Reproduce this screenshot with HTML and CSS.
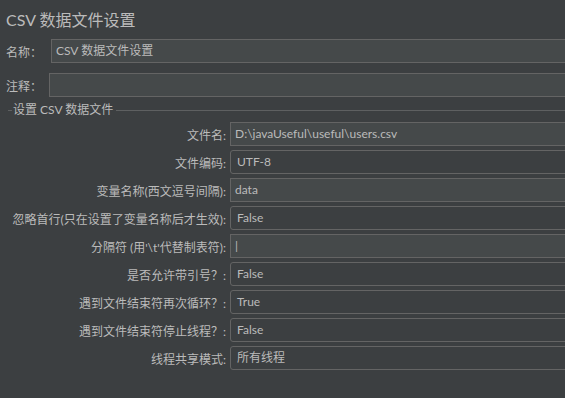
FILE: index.html
```html
<!DOCTYPE html>
<html lang="zh-CN">
<head>
    <meta charset="UTF-8">
    <title>CSV 数据文件设置</title>
    <link rel="stylesheet" href="styles.css">
</head>
<body>
    <div class="panel">
        <h1 class="title">CSV 数据文件设置</h1>

        <div class="top-row name-row">
            <label class="top-label name-label">名称：</label>
            <div class="field text-field">CSV 数据文件设置</div>
        </div>
        <div class="top-row note-row">
            <label class="top-label note-label">注释：</label>
            <div class="field text-field"></div>
        </div>

        <fieldset class="group">
            <legend>设置 CSV 数据文件</legend>
            <div class="form-grid">
                <label>文件名:</label>
                <div class="field text-field">D:\javaUseful\useful\users.csv</div>

                <label>文件编码:</label>
                <div class="field combo">UTF-8</div>

                <label>变量名称(西文逗号间隔):</label>
                <div class="field text-field">data</div>

                <label>忽略首行(只在设置了变量名称后才生效):</label>
                <div class="field combo">False</div>

                <label>分隔符 (用'\t'代替制表符):</label>
                <div class="field text-field">|</div>

                <label>是否允许带引号？:</label>
                <div class="field combo">False</div>

                <label>遇到文件结束符再次循环？:</label>
                <div class="field combo">True</div>

                <label>遇到文件结束符停止线程？:</label>
                <div class="field combo">False</div>

                <label>线程共享模式:</label>
                <div class="field combo">所有线程</div>
            </div>
        </fieldset>
    </div>
</body>
</html>
```

FILE: styles.css
```css
/* Darcula style settings panel */
html, body {
    margin: 0;
    padding: 0;
    overflow: hidden;
    background-color: #3c3f41;
}
body {
    font-family: Lato, "Noto Sans CJK SC", sans-serif;
    font-size: 12px;
    color: #bbbbbb;
    width: 565px;
    height: 398px;
}
.panel {
    width: calc(100% + 20px);
    padding: 9px 0 0 0;
    box-sizing: border-box;
}
.title {
    margin: 0 0 0 6px;
    font-size: 16px;
    font-weight: normal;
    line-height: 22px;
    color: #bbbbbb;
}
.top-row {
    display: flex;
    align-items: center;
    padding-left: 6px;
}
.name-row {
    margin-top: 8px;
}
.note-row {
    margin-top: 10px;
}
.top-label {
    flex: none;
}
.name-label {
    width: 45px;
}
.note-label {
    width: 43px;
}
.top-row .field {
    flex: 1;
}
.field {
    height: 24px;
    line-height: 22px;
    box-sizing: border-box;
    border: 1px solid #646464;
    white-space: nowrap;
    overflow: hidden;
}
.text-field {
    background-color: #45494a;
    padding-left: 4px;
}
.combo {
    background-color: #3c3f41;
    border-radius: 3px;
    padding-left: 6px;
}
.group {
    margin: 4px 0 0 8px;
    padding: 3px 0 0 4px;
    border: none;
    border-top: 1px solid #5e6061;
    min-width: 0;
}
.group legend {
    padding: 0 3px 0 1px;
    line-height: 18px;
    color: #bbbbbb;
}
.form-grid {
    display: grid;
    grid-template-columns: 214px 1fr;
    column-gap: 4px;
    row-gap: 4px;
    align-items: center;
}
.form-grid label {
    text-align: right;
    white-space: nowrap;
}
```
